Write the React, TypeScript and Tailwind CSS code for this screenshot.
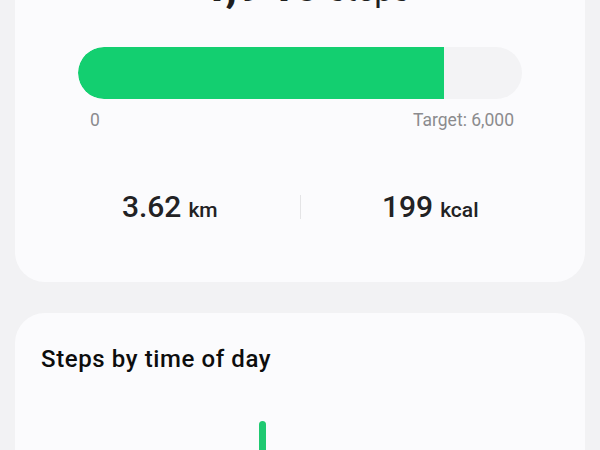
export default function App() {
  const steps = 4946;
  const target = 6000;
  const pct = (steps / target) * 100;
  return (
    <div
      className="w-[600px] h-[450px] overflow-hidden bg-[#f2f2f4] px-[15px]"
      style={{ fontFamily: "Roboto, 'Noto Sans', sans-serif" }}
    >
      <div className="-mt-[60px] bg-[#fbfbfd] rounded-[30px] pt-[20px] pb-[20px]">
        <div className="flex items-baseline justify-center gap-[9px] pl-[8px] h-[50px] leading-[50px]">
          <span className="text-[48px] font-bold text-[#1f1f1f]">4,946</span>
          <span className="text-[33px] text-[#1f1f1f]">steps</span>
        </div>
        <div className="mt-[37px] mx-[63px]">
          <div className="h-[52px] rounded-full bg-[#f3f3f5] overflow-hidden">
            <div className="h-full bg-[#13cf70] rounded-l-full" style={{ width: `${pct}%` }} />
          </div>
          <div className="flex justify-between pl-[12px] pr-[8px] mt-[9px] text-[17.5px] leading-[24px] text-[#8b8b8e]">
            <span>0</span>
            <span>Target: 6,000</span>
          </div>
        </div>
        <div className="flex items-center mt-[52px] mb-[33px] px-[25px]">
          <div className="flex-1 flex items-baseline justify-center gap-[7px] text-[#222224] font-medium">
            <span className="text-[30px]">3.62</span>
            <span className="text-[21px]">km</span>
          </div>
          <div className="w-px h-[24px] bg-[#e4e4e6]" />
          <div className="flex-1 flex items-baseline justify-center gap-[7px] text-[#222224] font-medium">
            <span className="text-[30px]">199</span>
            <span className="text-[21px]">kcal</span>
          </div>
        </div>
      </div>
      <div className="mt-[31px] bg-[#fbfbfd] rounded-t-[30px] h-[200px] px-[26px] pt-[30px]">
        <div className="text-[24px] leading-[32px] font-medium tracking-[0.6px] text-[#0d0d0d]">Steps by time of day</div>
        <div className="relative mt-[46px] h-[60px]">
          <div className="absolute left-[218px] top-[0px] w-[7px] h-[60px] rounded-full bg-[#1fc971]" />
        </div>
      </div>
    </div>
  );
}
